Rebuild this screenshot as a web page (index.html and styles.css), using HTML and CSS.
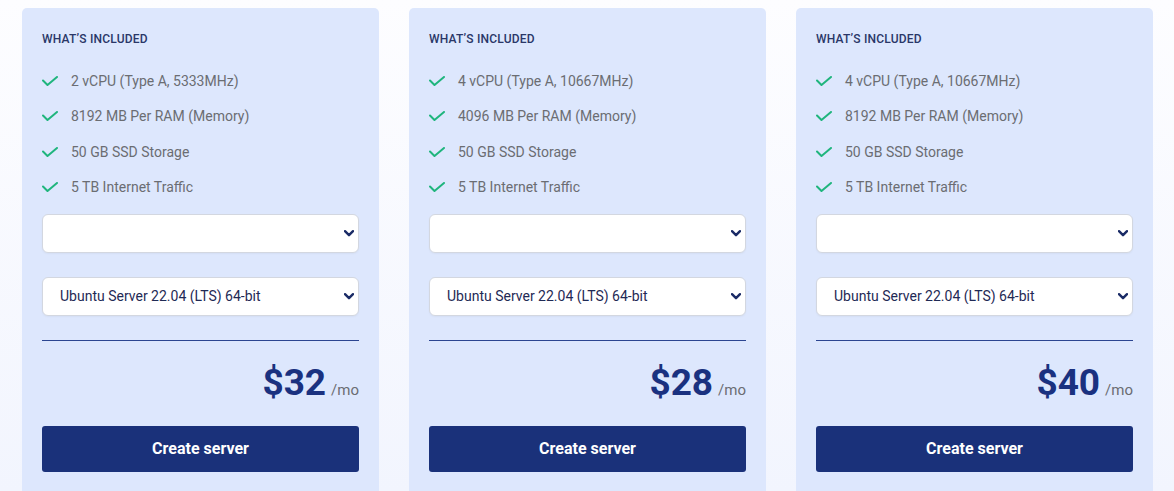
FILE: index.html
```html
<!DOCTYPE html>
<html lang="en">
<head>
<meta charset="utf-8">
<title>Plans</title>
<link rel="stylesheet" href="styles.css">
</head>
<body>
<div class="plans">
  <div class="card">
    <h3 class="title">What’s included</h3>
    <ul class="features">
      <li><svg class="check" viewBox="0 0 16 10"><path d="M1 4.5 L5.5 9 L15 1"/></svg><span>2 vCPU (Type A, 5333MHz)</span></li>
      <li><svg class="check" viewBox="0 0 16 10"><path d="M1 4.5 L5.5 9 L15 1"/></svg><span>8192 MB Per RAM (Memory)</span></li>
      <li><svg class="check" viewBox="0 0 16 10"><path d="M1 4.5 L5.5 9 L15 1"/></svg><span>50 GB SSD Storage</span></li>
      <li><svg class="check" viewBox="0 0 16 10"><path d="M1 4.5 L5.5 9 L15 1"/></svg><span>5 TB Internet Traffic</span></li>
    </ul>
    <div class="select-wrap">
      <select class="select"><option></option></select>
      <svg class="chev" viewBox="0 0 10 7"><path d="M1 1.2 L5 5.2 L9 1.2"/></svg>
    </div>
    <div class="select-wrap second">
      <select class="select"><option>Ubuntu Server 22.04 (LTS) 64-bit</option></select>
      <svg class="chev" viewBox="0 0 10 7"><path d="M1 1.2 L5 5.2 L9 1.2"/></svg>
    </div>
    <hr class="divider">
    <div class="price"><span class="amount">$32</span><span class="per">/mo</span></div>
    <button class="btn">Create server</button>
  </div>

  <div class="card">
    <h3 class="title">What’s included</h3>
    <ul class="features">
      <li><svg class="check" viewBox="0 0 16 10"><path d="M1 4.5 L5.5 9 L15 1"/></svg><span>4 vCPU (Type A, 10667MHz)</span></li>
      <li><svg class="check" viewBox="0 0 16 10"><path d="M1 4.5 L5.5 9 L15 1"/></svg><span>4096 MB Per RAM (Memory)</span></li>
      <li><svg class="check" viewBox="0 0 16 10"><path d="M1 4.5 L5.5 9 L15 1"/></svg><span>50 GB SSD Storage</span></li>
      <li><svg class="check" viewBox="0 0 16 10"><path d="M1 4.5 L5.5 9 L15 1"/></svg><span>5 TB Internet Traffic</span></li>
    </ul>
    <div class="select-wrap">
      <select class="select"><option></option></select>
      <svg class="chev" viewBox="0 0 10 7"><path d="M1 1.2 L5 5.2 L9 1.2"/></svg>
    </div>
    <div class="select-wrap second">
      <select class="select"><option>Ubuntu Server 22.04 (LTS) 64-bit</option></select>
      <svg class="chev" viewBox="0 0 10 7"><path d="M1 1.2 L5 5.2 L9 1.2"/></svg>
    </div>
    <hr class="divider">
    <div class="price"><span class="amount">$28</span><span class="per">/mo</span></div>
    <button class="btn">Create server</button>
  </div>

  <div class="card">
    <h3 class="title">What’s included</h3>
    <ul class="features">
      <li><svg class="check" viewBox="0 0 16 10"><path d="M1 4.5 L5.5 9 L15 1"/></svg><span>4 vCPU (Type A, 10667MHz)</span></li>
      <li><svg class="check" viewBox="0 0 16 10"><path d="M1 4.5 L5.5 9 L15 1"/></svg><span>8192 MB Per RAM (Memory)</span></li>
      <li><svg class="check" viewBox="0 0 16 10"><path d="M1 4.5 L5.5 9 L15 1"/></svg><span>50 GB SSD Storage</span></li>
      <li><svg class="check" viewBox="0 0 16 10"><path d="M1 4.5 L5.5 9 L15 1"/></svg><span>5 TB Internet Traffic</span></li>
    </ul>
    <div class="select-wrap">
      <select class="select"><option></option></select>
      <svg class="chev" viewBox="0 0 10 7"><path d="M1 1.2 L5 5.2 L9 1.2"/></svg>
    </div>
    <div class="select-wrap second">
      <select class="select"><option>Ubuntu Server 22.04 (LTS) 64-bit</option></select>
      <svg class="chev" viewBox="0 0 10 7"><path d="M1 1.2 L5 5.2 L9 1.2"/></svg>
    </div>
    <hr class="divider">
    <div class="price"><span class="amount">$40</span><span class="per">/mo</span></div>
    <button class="btn">Create server</button>
  </div>
</div>
</body>
</html>
```
FILE: styles.css
```css
html, body {
  margin: 0;
  height: 100%;
}
body {
  font-family: Roboto, "Liberation Sans", Arial, sans-serif;
  background: linear-gradient(180deg, #fdfdff 0%, #f2f5fe 100%);
  overflow: hidden;
}
.plans {
  display: grid;
  grid-template-columns: repeat(3, 357px);
  column-gap: 30px;
  padding: 8px 21px 0 22px;
}
.card {
  background: #dde7fd;
  border-radius: 5px;
  padding: 24px 20px 40px 20px;
  display: flex;
  flex-direction: column;
}
.title {
  margin: 0;
  font-size: 12px;
  line-height: 14px;
  font-weight: 500;
  text-transform: uppercase;
  letter-spacing: 0.2px;
  color: #2a3768;
}
.features {
  list-style: none;
  margin: 25px 0 0 0;
  padding: 0;
  display: flex;
  flex-direction: column;
  gap: 15.3px;
}
.features li {
  display: flex;
  align-items: center;
  height: 20px;
  font-size: 14px;
  color: #6b6d72;
}
.check {
  width: 16px;
  height: 10px;
  margin-right: 13px;
  flex: none;
}
.check path {
  fill: none;
  stroke: #1fb57d;
  stroke-width: 2;
  stroke-linecap: round;
  stroke-linejoin: round;
}
.select-wrap {
  position: relative;
  margin-top: 17px;
}
.select-wrap.second {
  margin-top: 24px;
}
.select {
  display: block;
  width: 100%;
  height: 39px;
  appearance: none;
  -webkit-appearance: none;
  background: #ffffff;
  border: 1px solid #d3d7e0;
  border-radius: 6px;
  padding: 0 30px 0 17px;
  font-family: Roboto, "Liberation Sans", Arial, sans-serif;
  font-size: 14px;
  color: #1f2a55;
  box-shadow: 0 1px 2px rgba(0, 0, 0, 0.04);
}
.chev {
  position: absolute;
  right: 5px;
  top: 16px;
  width: 10px;
  height: 7px;
  pointer-events: none;
}
.chev path {
  fill: none;
  stroke: #1a2b66;
  stroke-width: 2.4;
  stroke-linecap: round;
  stroke-linejoin: round;
}
.divider {
  border: 0;
  height: 1px;
  background: #2b4591;
  margin: 24px 0 0 0;
}
.price {
  display: flex;
  justify-content: flex-end;
  align-items: baseline;
  gap: 5px;
  margin-top: 20px;
}
.amount {
  font-size: 37px;
  line-height: 44px;
  font-weight: 700;
  color: #1a3180;
}
.per {
  font-size: 15px;
  color: #6b6d72;
}
.btn {
  margin-top: 21px;
  height: 46px;
  width: 100%;
  border: 0;
  border-radius: 3px;
  background: #1a317a;
  color: #ffffff;
  font-family: Roboto, "Liberation Sans", Arial, sans-serif;
  font-size: 16px;
  font-weight: 700;
}
```
